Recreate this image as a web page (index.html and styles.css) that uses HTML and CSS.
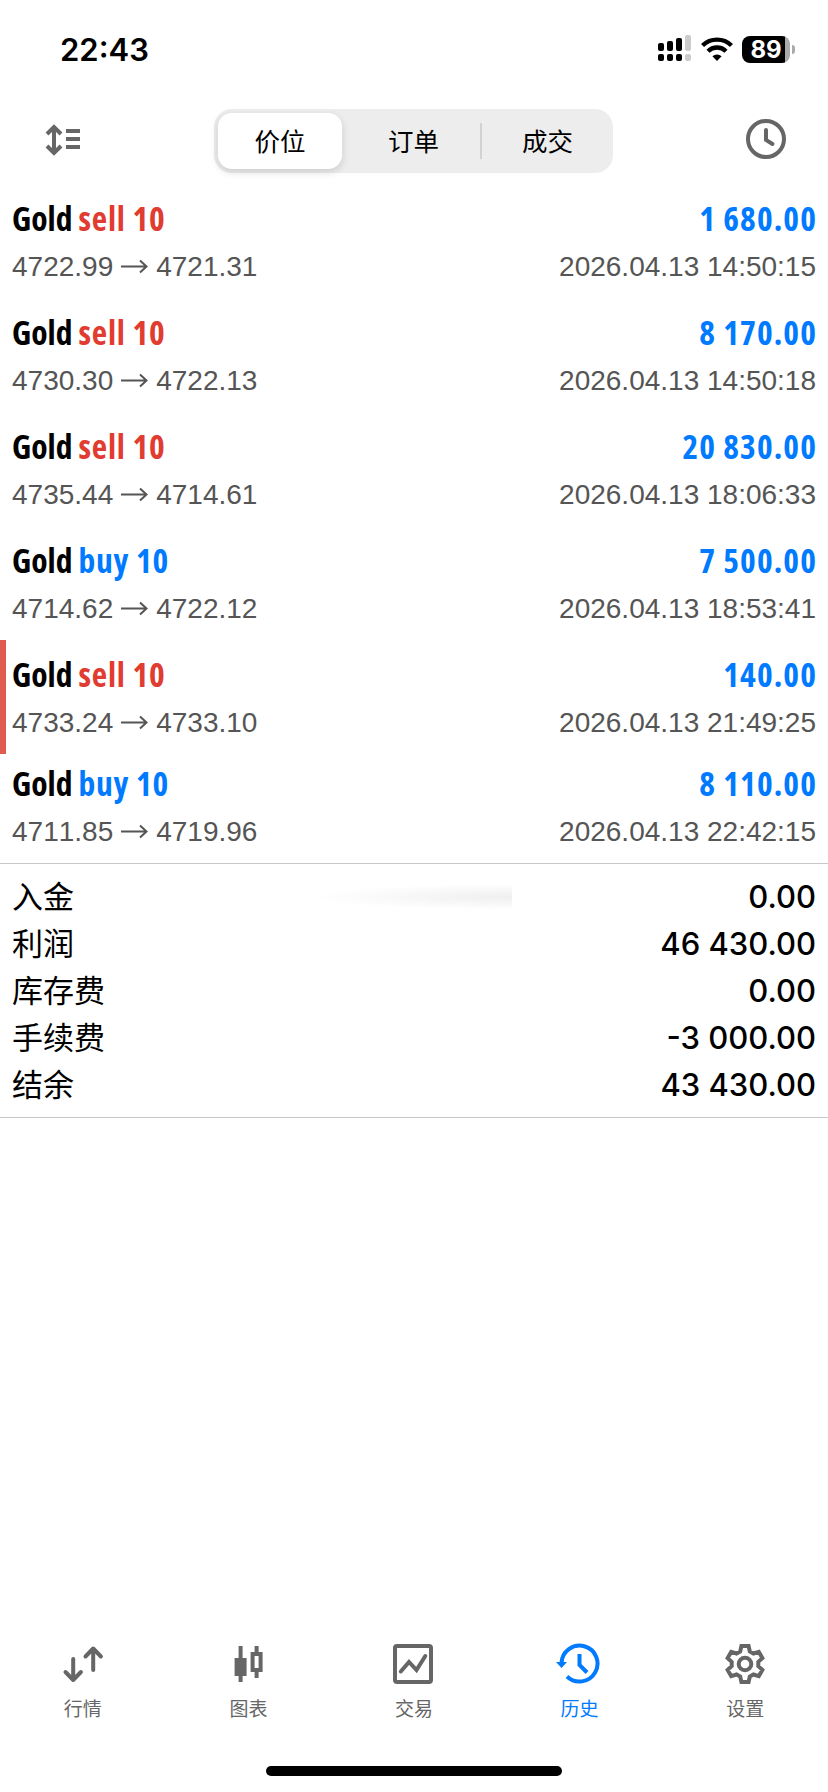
FILE: index.html
```html
<!DOCTYPE html>
<html lang="zh-CN">
<head>
    <meta charset="UTF-8">
    <meta name="viewport" content="width=device-width, initial-scale=1.0">
    <title>历史</title>
    <link rel="stylesheet" href="styles.css">
</head>
<body>

<header class="status-bar">
    <span class="time">22:43</span>
    <svg class="signal" width="34" height="28" viewBox="0 0 34 28">
        <g fill="#000">
            <rect x="0" y="8" width="6" height="8" rx="2"/>
            <rect x="9" y="6" width="6" height="10" rx="2"/>
            <rect x="18" y="3" width="6" height="13" rx="2"/>
            <rect x="0" y="19" width="6" height="7" rx="2"/>
            <rect x="9" y="19" width="6" height="7" rx="2"/>
            <rect x="18" y="19" width="6" height="7" rx="2"/>
        </g>
        <g fill="#ccc">
            <rect x="27" y="0" width="6" height="16" rx="2"/>
            <rect x="27" y="19" width="6" height="7" rx="2"/>
        </g>
    </svg>
    <svg class="wifi" width="32" height="24" viewBox="0 0 32 24">
        <g fill="none" stroke="#000" stroke-width="4.4">
            <path d="M1.5 8.5a20.8 20.8 0 0 1 29 0"/>
            <path d="M7 14.2a12.8 12.8 0 0 1 18 0"/>
        </g>
        <path d="M16 24l-4.6-4.7a6.6 6.6 0 0 1 9.2 0z"/>
    </svg>
    <div class="battery"><span>89</span></div>
</header>

<nav class="toolbar">
    <svg class="sort" width="36" height="32" viewBox="0 0 36 32">
        <g fill="none" stroke="#666" stroke-width="4">
            <path d="M9 4v24M2 10l7-7 7 7M2 22l7 7 7-7"/>
            <path d="M21 7h14M21 15h14M21 23h14"/>
        </g>
    </svg>
    <div class="segmented">
        <button class="segment active">价位</button>
        <button class="segment middle">订单</button>
        <button class="segment last">成交</button>
    </div>
    <svg class="clock" width="40" height="40" viewBox="0 0 40 40">
        <g fill="none" stroke="#666" stroke-width="4">
            <circle cx="20" cy="20" r="18"/>
            <path d="M20 11v10l6.5 4" stroke-linecap="round"/>
        </g>
    </svg>
</nav>

<main>
    <ul class="deals" id="deals"></ul>

    <dl class="summary">
        <div class="redacted"></div>
        <div class="line"><dt>入金</dt><dd>0.00</dd></div>
        <div class="line"><dt>利润</dt><dd>46 430.00</dd></div>
        <div class="line"><dt>库存费</dt><dd>0.00</dd></div>
        <div class="line"><dt>手续费</dt><dd>-3 000.00</dd></div>
        <div class="line"><dt>结余</dt><dd>43 430.00</dd></div>
    </dl>
</main>

<footer class="tab-bar">
    <a class="tab">
        <svg width="56" height="44" viewBox="0 0 56 44">
            <path d="M18.2 17v21M10.5 30l7.7 8 7.7-8M38.2 28V7M30.5 14.5l7.7-8 7.7 8" fill="none" stroke="#666" stroke-width="4" stroke-linecap="round" stroke-linejoin="round"/>
        </svg>
        <span>行情</span>
    </a>
    <a class="tab">
        <svg width="56" height="44" viewBox="0 0 56 44">
            <path d="M18.6 4h4v12h4v18h-4v6h-4v-6h-4V16h4z" fill="#666"/>
            <path d="M34.6 4h4v6h4v20h-4v6h-4v-6h-4V10h4zM34.6 14v12h4V14z" fill="#666" fill-rule="evenodd"/>
        </svg>
        <span>图表</span>
    </a>
    <a class="tab">
        <svg width="56" height="44" viewBox="0 0 56 44">
            <rect x="9" y="4" width="36" height="36" rx="2" fill="none" stroke="#666" stroke-width="4"/>
            <path d="M14.8 29.5l8.2-9.5 7.5 8L39.3 14" fill="none" stroke="#666" stroke-width="4" stroke-linecap="round"/>
        </svg>
        <span>交易</span>
    </a>
    <a class="tab active">
        <svg width="56" height="44" viewBox="0 0 56 44">
            <path d="M9.5 21a18 18 0 1 1 5.5 13.5M27.5 12v11l7.5 7.5" fill="none" stroke="#007aff" stroke-width="4"/>
            <path d="M4 20h11l-5.5 6z" fill="#007aff"/>
        </svg>
        <span>历史</span>
    </a>
    <a class="tab">
        <svg width="56" height="44" viewBox="0 0 56 44">
            <g fill="none" stroke="#666" stroke-width="4">
                <path d="M24.4 4h7.2l1.2 5.4 3.7 2.1 5.3-1.6 3.6 6.2-4.1 3.8v4.2l4.1 3.8-3.6 6.2-5.3-1.6-3.7 2.1-1.2 5.4h-7.2l-1.2-5.4-3.7-2.1-5.3 1.6-3.6-6.2 4.1-3.8v-4.2l-4.1-3.8 3.6-6.2 5.3 1.6 3.7-2.1z"/>
                <circle cx="28" cy="22" r="6.3"/>
            </g>
        </svg>
        <span>设置</span>
    </a>
</footer>
<div class="home-indicator"></div>

<script src="script.js"></script>
</body>
</html>
```
FILE: styles.css
```css
* {
    box-sizing: border-box;
}
body {
    width: 828px;
    height: 1792px;
    margin: 0;
    display: flex;
    flex-direction: column;
    background: #fff;
    color: #000;
    font-family: Inter, "Noto Sans CJK SC", sans-serif;
    overflow: hidden;
}
.status-bar {
    height: 98px;
    padding: 0 38px 0 60px;
    display: flex;
    align-items: center;
}
.time {
    margin-right: auto;
    font-size: 31px;
    font-weight: 600;
}
.signal {
    margin-right: 9px;
}
.wifi {
    margin-right: 9px;
}
.battery {
    position: relative;
    width: 48px;
    height: 27px;
    border-radius: 8px;
    background: linear-gradient(to right, #000 43px, #aaa 43px);
    color: #fff;
    font-size: 24px;
    font-weight: 700;
    line-height: 27px;
    text-align: center;
}
.battery::after {
    content: "";
    position: absolute;
    left: 50px;
    top: 9px;
    width: 3px;
    height: 9px;
    border-radius: 0 3px 3px 0;
    background: #aaa;
}
.toolbar {
    height: 86px;
    padding: 11px 42px 0 45px;
    display: flex;
    align-items: flex-start;
    justify-content: space-between;
}
.sort {
    margin-top: 15px;
}
.clock {
    margin-top: 10px;
}
.segmented {
    width: 399px;
    height: 64px;
    padding: 4px;
    display: flex;
    border-radius: 18px;
    background: #ededed;
}
.segment {
    padding: 0 0 4px;
    border: none;
    background: none;
    color: #000;
    font: 400 25.5px "Noto Sans CJK SC", sans-serif;
}
.segment.active {
    width: 124px;
    border-radius: 14px;
    background: #fff;
    box-shadow: 0 3px 8px rgba(0, 0, 0, 0.14);
}
.segment.middle {
    width: 138px;
    padding-left: 5px;
}
.segment.last {
    flex: 1;
    padding-left: 6px;
    background: linear-gradient(#d2d2d2, #d2d2d2) 0 50% / 2px 36px no-repeat;
}
.deals {
    margin: 0;
    padding: 0;
    list-style: none;
}
.deal {
    height: 114px;
    padding: 12px 12px 0;
    border-left: 0 solid #e05c50;
}
.deal.marked {
    padding-left: 6px;
    border-left-width: 6px;
}
.deal:last-child {
    height: 109px;
    padding-top: 7px;
}
.deal-row {
    display: flex;
    justify-content: space-between;
}
.deal-title {
    height: 47px;
    font-family: "Open Sans", sans-serif;
    font-size: 33.5px;
    font-weight: 700;
    font-stretch: 75%;
    line-height: 45px;
}
.side {
    letter-spacing: 0.8px;
}
.sell {
    color: #e03c31;
}
.buy, .profit {
    color: #007aff;
}
.profit {
    margin-right: -1px;
    letter-spacing: 1.1px;
}
.deal-info {
    height: 44px;
    color: #555;
    font-family: "Liberation Sans", Arial, sans-serif;
    font-size: 28px;
    font-kerning: none;
    line-height: 48px;
}
.arrow {
    margin: 0 8px;
    vertical-align: -1px;
}
.summary {
    position: relative;
    height: 255px;
    margin: 0;
    padding: 9px 12px 0;
    border-top: 1px solid #c8c8c8;
    border-bottom: 1px solid #c8c8c8;
}
.line {
    height: 47px;
    display: flex;
    justify-content: space-between;
    line-height: 47px;
}
dt {
    font-family: "Noto Sans CJK SC", sans-serif;
    font-size: 31px;
    line-height: 43px;
}
dd {
    margin: 0;
    font-size: 31px;
    font-weight: 500;
}
.redacted {
    position: absolute;
    left: 310px;
    top: 20px;
    width: 202px;
    height: 26px;
    background: radial-gradient(ellipse at right, #efefef, #fff 70%);
}
.tab-bar {
    height: 118px;
    margin-top: auto;
    display: flex;
}
.tab {
    flex: 1;
    display: flex;
    flex-direction: column;
    align-items: center;
    color: #666;
    font: 400 19px/28px "Noto Sans CJK SC", sans-serif;
}
.tab span {
    margin-top: 8px;
}
.tab.active {
    color: #007aff;
}
.home-indicator {
    width: 296px;
    height: 10px;
    margin: 6px auto 16px;
    border-radius: 5px;
    background: #000;
}
```
FILE: script.js
```js
const deals = [
    { side: "sell", open: "4722.99", close: "4721.31", profit: "1 680.00", time: "14:50:15" },
    { side: "sell", open: "4730.30", close: "4722.13", profit: "8 170.00", time: "14:50:18" },
    { side: "sell", open: "4735.44", close: "4714.61", profit: "20 830.00", time: "18:06:33" },
    { side: "buy", open: "4714.62", close: "4722.12", profit: "7 500.00", time: "18:53:41" },
    { side: "sell", open: "4733.24", close: "4733.10", profit: "140.00", time: "21:49:25", marked: true },
    { side: "buy", open: "4711.85", close: "4719.96", profit: "8 110.00", time: "22:42:15" }
];

const arrow = `<svg class="arrow" width="27" height="18" viewBox="0 0 27 18"><path d="M0 7.5h25M19 1.5l6.5 6-6.5 6" fill="none" stroke="#555" stroke-width="2"/></svg>`;

document.getElementById('deals').innerHTML = deals.map(deal => `
    <li class="deal ${deal.marked ? 'marked' : ''}">
        <div class="deal-row deal-title">
            <span>Gold <span class="side ${deal.side}">${deal.side} 10</span></span>
            <span class="profit">${deal.profit}</span>
        </div>
        <div class="deal-row deal-info">
            <span>${deal.open}${arrow}${deal.close}</span>
            <span>2026.04.13 ${deal.time}</span>
        </div>
    </li>
`).join('');
```
